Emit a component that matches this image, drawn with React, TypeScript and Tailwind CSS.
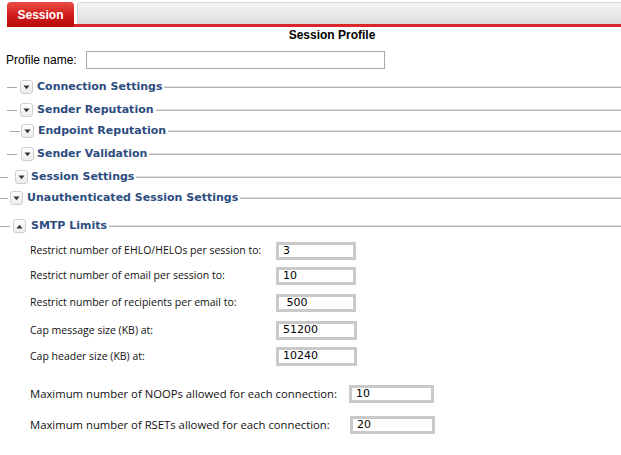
import React from "react";

type Section = {
  title: string;
  row: string;
  dash: string;
  icon: string;
  text: string;
  up?: boolean;
};

const sections: Section[] = [
  { title: "Connection Settings", row: "mt-[8px]", dash: "ml-[7px] w-[10px]", icon: "ml-[3px]", text: "ml-[4px]" },
  { title: "Sender Reputation", row: "mt-[3px]", dash: "ml-[7px] w-[10px]", icon: "ml-[3px]", text: "ml-[4px]" },
  { title: "Endpoint Reputation", row: "mt-[1px]", dash: "ml-[10px] w-[10px]", icon: "ml-[1px]", text: "ml-[4px]" },
  { title: "Sender Validation", row: "mt-[3px]", dash: "ml-[7px] w-[10px]", icon: "ml-[4px]", text: "ml-[3px]" },
  { title: "Session Settings", row: "mt-[3px]", dash: "ml-0 w-[8px]", icon: "ml-[7px]", text: "ml-[3px]" },
  { title: "Unauthenticated Session Settings", row: "mt-[1px]", dash: "ml-0 w-[8px]", icon: "ml-[2px]", text: "ml-[4px]" },
  { title: "SMTP Limits", row: "mt-[8px]", dash: "ml-0 w-[10px]", icon: "ml-[3px]", text: "ml-[5px]", up: true },
];

type Limit = { label: string; value: string; row: string; labelW: string; input: string; size: string };

const limits: Limit[] = [
  { label: "Restrict number of EHLO/HELOs per session to:", value: "3", row: "mt-[6px]", labelW: "w-[246px]", input: "h-[18px] w-[80px]", size: "text-[10.5px]" },
  { label: "Restrict number of email per session to:", value: "10", row: "mt-[7px]", labelW: "w-[246px]", input: "h-[18px] w-[80px]", size: "text-[10.5px]" },
  { label: "Restrict number of recipients per email to:", value: " 500", row: "mt-[9px]", labelW: "w-[246px]", input: "h-[18px] w-[80px]", size: "text-[10.5px]" },
  { label: "Cap message size (KB) at:", value: "51200", row: "mt-[9px]", labelW: "w-[246px]", input: "h-[19px] w-[81px]", size: "text-[10.5px]" },
  { label: "Cap header size (KB) at:", value: "10240", row: "mt-[7px]", labelW: "w-[246px]", input: "h-[19px] w-[81px]", size: "text-[10.5px]" },
  { label: "Maximum number of NOOPs allowed for each connection:", value: "10", row: "mt-[19px]", labelW: "w-[319px]", input: "h-[18px] w-[85px]", size: "text-[11.3px]" },
  { label: "Maximum number of RSETs allowed for each connection:", value: "20", row: "mt-[13px]", labelW: "w-[320px]", input: "h-[18px] w-[85px]", size: "text-[11.3px]" },
];

function Toggle({ up }: { up?: boolean }) {
  return (
    <span className="flex h-[14px] w-[13px] items-center justify-center rounded-[3px] border border-[#cfcfcf] bg-gradient-to-b from-white to-[#ececec]">
      <svg width="7" height="5" viewBox="0 0 7 5">
        {up ? <path d="M0.5 4.5 L3.5 0.8 L6.5 4.5 Z" fill="#333" /> : <path d="M0.5 0.5 L6.5 0.5 L3.5 4.2 Z" fill="#333" />}
      </svg>
    </span>
  );
}

export default function App() {
  return (
    <div className="h-[455px] w-[621px] overflow-hidden bg-white font-['Liberation_Sans',Arial,sans-serif] text-[12px] text-black">
      {/* tab strip */}
      <div className="flex h-[27px] items-end pt-[2px]">
        <div className="ml-[7px] flex h-[25px] w-[67px] items-center justify-center rounded-t-[4px] bg-gradient-to-b from-[#ea4b43] via-[#d21d1d] to-[#b80808] text-[12px] font-bold text-white">
          Session
        </div>
        <div className="flex h-[25px] flex-1 flex-col">
          <div className="ml-[3px] h-[22px] rounded-tl-[4px] border-l border-t border-[#d6d6d6] bg-gradient-to-b from-[#f4f4f4] via-[#e9e9e9] to-[#dcdcdc]" />
          <div className="h-[3px] bg-[#d8262a]" />
        </div>
      </div>

      <div className="h-[16px] pl-[43px] text-center text-[12px] font-bold leading-[16px]">Session Profile</div>

      <div className="mt-[8px] flex h-[18px] items-center pl-[6px]">
        <span className="w-[80px]">Profile name:</span>
        <div className="h-[18px] w-[299px] border border-[#a9a9a9] bg-white" />
      </div>

      {sections.map((s) => (
        <div key={s.title} className={`flex h-[20px] items-center ${s.row}`}>
          <span className={`h-px bg-[#a8a8a8] ${s.dash}`} />
          <span className={s.icon}>
            <Toggle up={s.up} />
          </span>
          <span className={`${s.text} whitespace-nowrap font-['DejaVu_Sans',Verdana,sans-serif] text-[11px] font-bold text-[#2d4c80]`}>
            {s.title}
          </span>
          <span className="ml-[2px] h-[2px] flex-1 border-b border-[#b5b5b5] bg-[#e2e2e2]" />
        </div>
      ))}

      {limits.map((l) => (
        <div key={l.label} className={`flex items-center pl-[30px] ${l.row}`}>
          <span className={`${l.labelW} ${l.size} whitespace-nowrap font-['Open_Sans',sans-serif] text-[#111]`}>{l.label}</span>
          <div
            className={`flex ${l.input} items-center whitespace-pre border-[3px] border-[#c9c9c9] bg-white pl-[4px] font-['DejaVu_Sans',Verdana,sans-serif] text-[11px]`}
          >
            {l.value}
          </div>
        </div>
      ))}
    </div>
  );
}
